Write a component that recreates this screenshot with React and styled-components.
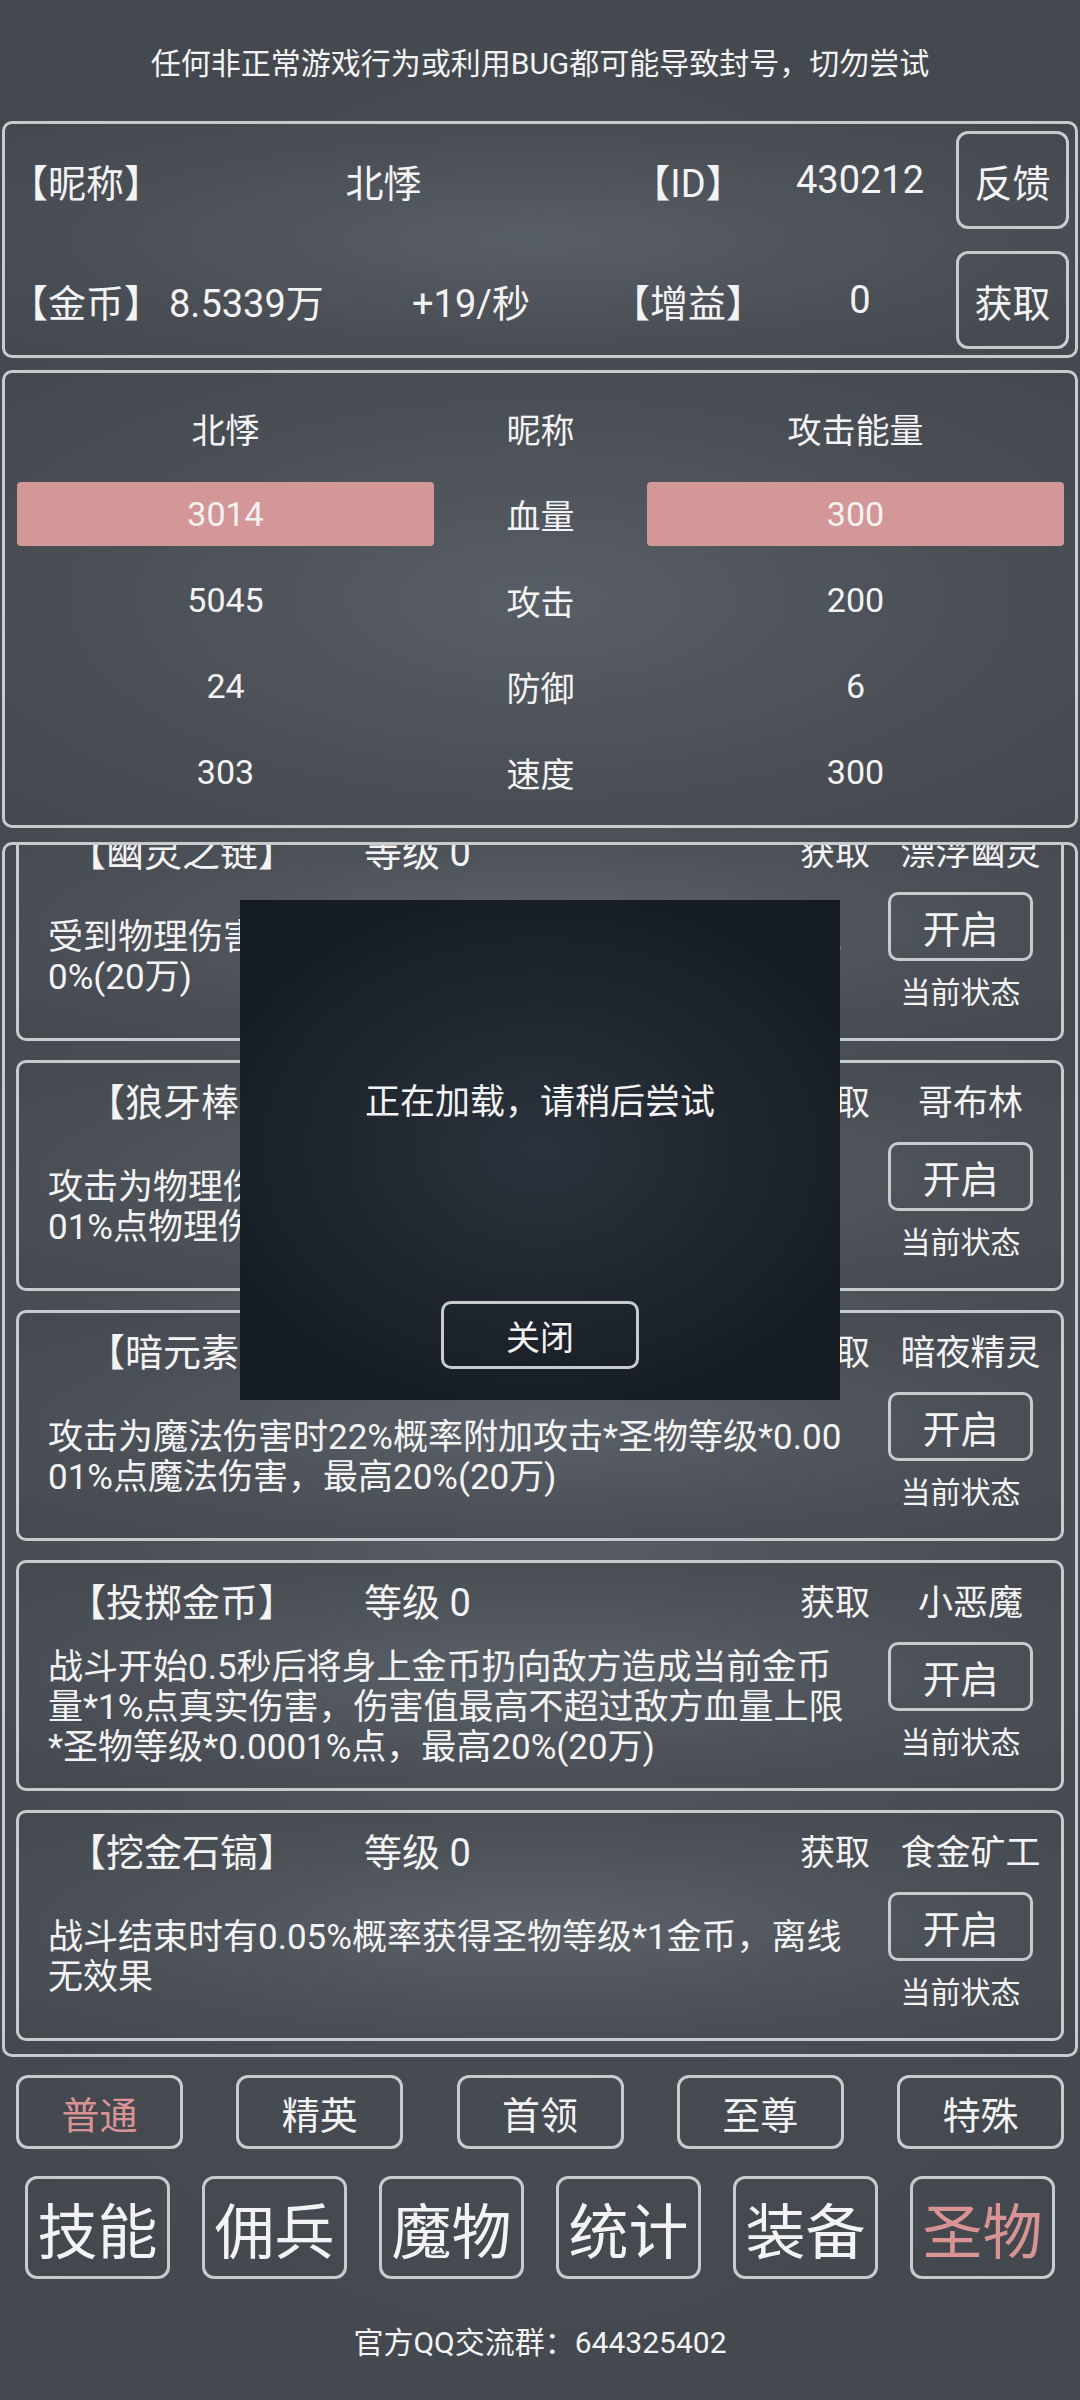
import React from 'react';
import styled, { createGlobalStyle, css } from 'styled-components';

const FONT = `Roboto, "Noto Sans CJK SC", sans-serif`;
const LINE = '#c9cacc';
const PINK = '#d99393';

const GlobalStyle = createGlobalStyle`
  html, body { margin: 0; padding: 0; }
  body { background: #464b51; font-family: ${FONT}; color: #f3f3f3; }
  * { box-sizing: border-box; }
`;

const Page = styled.div`
  position: relative;
  width: 1080px;
  height: 2400px;
  overflow: hidden;
  display: flex;
  flex-direction: column;
  background: radial-gradient(ellipse 80% 55% at 50% 50%, #4f555b 0%, #464b51 70%, #43484e 100%);
`;

const Notice = styled.div`
  height: 121px;
  display: flex;
  align-items: center;
  justify-content: center;
  font-size: 30px;
`;

const Panel = styled.section`
  margin: ${(p) => p.$mt || 0}px 2px 0;
  border: 3px solid ${LINE};
  border-radius: 10px;
  background: radial-gradient(ellipse at center, #585e65 0%, #4b5057 55%, #43484e 100%);
`;

const InfoBody = styled.div`
  display: flex;
  flex-direction: column;
  gap: 22px;
  padding: 7px 6px 6px 5px;
`;

const InfoRow = styled.div`
  display: grid;
  grid-template-columns: ${(p) => p.$cols};
  align-items: center;
  height: 98px;
  font-size: 38px;
`;

const Cell = styled.div`
  text-align: ${(p) => p.$align || 'center'};
  padding-left: ${(p) => p.$pl || 0}px;
  font-size: ${(p) => (p.$fs ? `${p.$fs}px` : 'inherit')};
  white-space: nowrap;
`;

const Btn = styled.button`
  font-family: ${FONT};
  color: ${(p) => (p.$active ? PINK : '#f3f3f3')};
  background: transparent;
  border: 3px solid ${LINE};
  border-radius: 12px;
  padding: 0;
  display: flex;
  align-items: center;
  justify-content: center;
`;

const SideBtn = styled(Btn)`
  width: 113px;
  height: 98px;
  font-size: 38px;
`;

const StatsGrid = styled.div`
  display: grid;
  grid-template-columns: 1fr 213px 1fr;
  grid-auto-rows: 86px;
  padding: 12px 11px 10px 12px;
  font-size: 34px;
`;

const StatCell = styled.div`
  display: flex;
  align-items: center;
  justify-content: center;
  ${(p) =>
    p.$hl &&
    css`
      margin: 11px 0;
      background: #d39797;
      border-radius: 4px;
    `}
`;

const ListPanel = styled(Panel)`
  height: 1215px;
  overflow: hidden;
`;

const ListInner = styled.div`
  display: flex;
  flex-direction: column;
  gap: 19px;
  padding: 0 11px;
  margin-top: -35px;
`;

const Card = styled.div`
  height: 231px;
  border: 3px solid ${LINE};
  border-radius: 10px;
  display: grid;
  grid-template-rows: 73px 1fr;
  padding-bottom: 12px;
  background: radial-gradient(ellipse at center, #5b6168 0%, #4c5158 55%, #44494f 100%);
`;

const TitleRow = styled.div`
  display: grid;
  grid-template-columns: 326px 1fr 90px 181px;
  align-items: center;
  font-size: 35px;
  white-space: nowrap;
`;

const CardBody = styled.div`
  display: grid;
  grid-template-columns: 802px 1fr;
  column-gap: 10px;
  padding: 4px 0 0 29px;
`;

const Desc = styled.div`
  align-self: center;
  font-size: 35px;
  line-height: 40px;
  word-break: break-all;
`;

const Side = styled.div`
  display: flex;
  flex-direction: column;
  align-items: center;
  padding-top: 2px;
`;

const OpenBtn = styled(Btn)`
  width: 145px;
  height: 69px;
  border-radius: 10px;
  font-size: 38px;
`;

const Status = styled.div`
  margin-top: 14px;
  font-size: 30px;
  line-height: 36px;
`;

const TabRow = styled.div`
  display: flex;
  justify-content: space-between;
  padding: 0 16px;
  margin-top: 18px;
`;

const Tab = styled(Btn)`
  width: 167px;
  height: 74px;
  font-size: 38px;
`;

const BigRow = styled.div`
  display: flex;
  justify-content: center;
  gap: 32px;
  margin-top: 27px;
`;

const BigTab = styled(Btn)`
  width: 145px;
  height: 103px;
  font-size: 60px;
`;

const Footer = styled.div`
  margin-top: 46px;
  text-align: center;
  font-size: 30px;
  line-height: 36px;
`;

const Modal = styled.div`
  position: absolute;
  left: 240px;
  top: 900px;
  width: 600px;
  height: 500px;
  display: flex;
  flex-direction: column;
  align-items: center;
  padding-top: 183px;
  background: radial-gradient(ellipse 60% 55% at 50% 50%, #2b333c 0%, #1f262e 55%, #161c23 100%);
`;

const ModalText = styled.div`
  font-size: 35px;
  line-height: 40px;
`;

const CloseBtn = styled(Btn)`
  margin-top: 178px;
  width: 198px;
  height: 68px;
  border-radius: 10px;
  font-size: 34px;
`;

const stats = [
  ['北悸', '昵称', '攻击能量', false],
  ['3014', '血量', '300', true],
  ['5045', '攻击', '200', false],
  ['24', '防御', '6', false],
  ['303', '速度', '300', false],
];

const relics = [
  {
    name: '【幽灵之链】',
    from: '漂浮幽灵',
    desc: '受到物理伤害时反弹伤害*圣物等级*0.001%，最高20%(20万)',
  },
  {
    name: '【狼牙棒】',
    from: '哥布林',
    desc: '攻击为物理伤害时22%概率附加攻击*圣物等级*0.0001%点物理伤害，最高20%(20万)',
  },
  {
    name: '【暗元素】',
    from: '暗夜精灵',
    desc: '攻击为魔法伤害时22%概率附加攻击*圣物等级*0.0001%点魔法伤害，最高20%(20万)',
  },
  {
    name: '【投掷金币】',
    from: '小恶魔',
    desc: '战斗开始0.5秒后将身上金币扔向敌方造成当前金币量*1%点真实伤害，伤害值最高不超过敌方血量上限*圣物等级*0.0001%点，最高20%(20万)',
  },
  {
    name: '【挖金石镐】',
    from: '食金矿工',
    desc: '战斗结束时有0.05%概率获得圣物等级*1金币，离线无效果',
  },
];

const tabs = ['普通', '精英', '首领', '至尊', '特殊'];
const bigTabs = ['技能', '佣兵', '魔物', '统计', '装备', '圣物'];

export default function App() {
  return (
    <>
      <GlobalStyle />
      <Page>
        <Notice>任何非正常游戏行为或利用BUG都可能导致封号，切勿尝试</Notice>

        <Panel>
          <InfoBody>
            <InfoRow $cols="145px 457px 152px 192px 113px">
              <Cell $align="left">【昵称】</Cell>
              <Cell>北悸</Cell>
              <Cell>【ID】</Cell>
              <Cell>430212</Cell>
              <SideBtn>反馈</SideBtn>
            </InfoRow>
            <InfoRow $cols="145px 175px 282px 152px 192px 113px">
              <Cell $align="left">【金币】</Cell>
              <Cell $align="left" $pl={14}>8.5339万</Cell>
              <Cell>+19/秒</Cell>
              <Cell>【增益】</Cell>
              <Cell>0</Cell>
              <SideBtn>获取</SideBtn>
            </InfoRow>
          </InfoBody>
        </Panel>

        <Panel $mt={12}>
          <StatsGrid>
            {stats.map(([a, b, c, hl]) => (
              <React.Fragment key={b}>
                <StatCell $hl={hl}>{a}</StatCell>
                <StatCell>{b}</StatCell>
                <StatCell $hl={hl}>{c}</StatCell>
              </React.Fragment>
            ))}
          </StatsGrid>
        </Panel>

        <ListPanel $mt={14}>
          <ListInner>
            {relics.map((r) => (
              <Card key={r.name}>
                <TitleRow>
                  <Cell $fs={38}>{r.name}</Cell>
                  <Cell $fs={38} $align="left" $pl={19}>等级 0</Cell>
                  <Cell>获取</Cell>
                  <Cell>{r.from}</Cell>
                </TitleRow>
                <CardBody>
                  <Desc>{r.desc}</Desc>
                  <Side>
                    <OpenBtn>开启</OpenBtn>
                    <Status>当前状态</Status>
                  </Side>
                </CardBody>
              </Card>
            ))}
          </ListInner>
        </ListPanel>

        <TabRow>
          {tabs.map((t, i) => (
            <Tab key={t} $active={i === 0}>{t}</Tab>
          ))}
        </TabRow>

        <BigRow>
          {bigTabs.map((t, i) => (
            <BigTab key={t} $active={i === bigTabs.length - 1}>{t}</BigTab>
          ))}
        </BigRow>

        <Footer>官方QQ交流群：644325402</Footer>

        <Modal>
          <ModalText>正在加载，请稍后尝试</ModalText>
          <CloseBtn>关闭</CloseBtn>
        </Modal>
      </Page>
    </>
  );
}
